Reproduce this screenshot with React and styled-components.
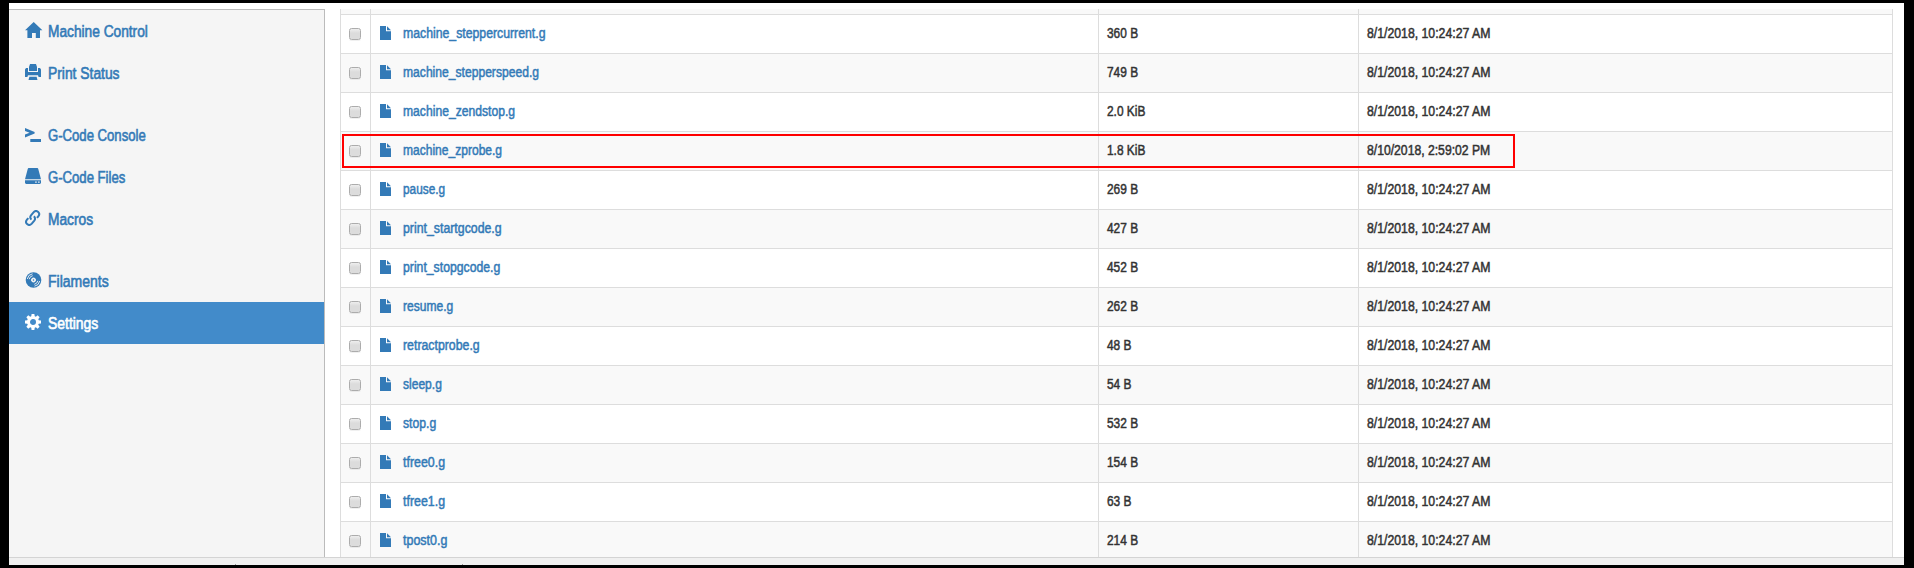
import React from "react";
import styled, { createGlobalStyle } from "styled-components";

const Global = createGlobalStyle`
  * { box-sizing: border-box; }
  body { margin: 0; background: #000; overflow: hidden; }
`;

const Frame = styled.div`
  width: 1914px;
  height: 568px;
  padding: 3px 10px 3px 9px;
  background: #000;
  font-family: "Liberation Sans", Arial, sans-serif;
`;

const Page = styled.div`
  height: 562px;
  background: #fff;
  padding-top: 6px;
  display: flex;
  flex-direction: column;
  overflow: hidden;
`;

const Body = styled.div`
  display: flex;
  height: 548px;
  overflow: hidden;
`;

const Sidebar = styled.nav`
  width: 316px;
  flex: none;
  background: #f5f5f5;
  border-top: 1px solid #bbb;
  border-right: 1px solid #bbb;
`;

const NavGroup = styled.div`
  margin-bottom: 20px;
`;

const NavItem = styled.a`
  display: flex;
  align-items: center;
  height: 42px;
  padding-left: 16px;
  font-size: 16px;
  color: ${(p) => (p.$active ? "#fff" : "#337ab7")};
  background: ${(p) => (p.$active ? "#428bca" : "transparent")};
`;

const NavIcon = styled.svg`
  width: 18px;
  height: 16px;
  flex: none;
  margin: 0 5px 2px 0;
  fill: currentColor;
`;

/* Condensed medium lettering */
const Condensed = styled.span`
  display: inline-block;
  transform: scaleX(${(p) => p.$scale});
  transform-origin: left center;
  white-space: nowrap;
  -webkit-text-stroke: ${(p) => p.$weight || 0.5}px currentColor;
`;

const NavLabel = styled(Condensed)`
  margin-top: 2px;
`;

const CellText = styled(Condensed)`
  margin-bottom: 2px;
`;

const Content = styled.main`
  flex: 1;
  padding: 0 11px 0 15px;
`;

const Table = styled.div`
  border: solid #ddd;
  border-width: 0 1px;
`;

const Row = styled.div`
  position: relative;
  display: grid;
  grid-template-columns: 30px 728px 260px 1fr;
  height: ${(p) => (p.$partial ? 6 : 39)}px;
  border-bottom: 1px solid #ddd;
  background: ${(p) => (p.$odd ? "#f9f9f9" : "#fff")};
`;

const Cell = styled.div`
  display: flex;
  align-items: center;
  padding: 0 8px;
  border-right: ${(p) => (p.$last ? 0 : 1)}px solid #ddd;
  font-size: 14px;
  color: #333;
`;

const NameCell = styled(Cell)`
  padding-left: 9px;
  color: #337ab7;
`;

const Checkbox = styled.span`
  width: 12px;
  height: 12px;
  flex: none;
  margin-top: -1px;
  border: 1px solid #acacac;
  border-radius: 2.5px;
  background: linear-gradient(#eee, #dcdcdc 40%, #dcdcdc);
  box-shadow: 0 1px 0 rgba(0, 0, 0, 0.06);
`;

const FileIcon = styled.svg`
  width: 11px;
  height: 14px;
  flex: none;
  margin: 0 11.5px 2px 0;
  fill: currentColor;
`;

const Highlight = styled.div`
  position: absolute;
  left: 1px;
  top: 2px;
  width: 1173px;
  height: 34px;
  border: 2px solid #f00;
`;

const Footer = styled.footer`
  display: flex;
  align-items: flex-end;
  height: 8px;
  border-top: 1px solid #d4d4d4;
  background: #f0f0f0;
`;

const FooterMark = styled.span`
  width: 1px;
  height: 1px;
  margin-left: 226px;
  background: #999;
`;

const glyphs = {
  home: <path d="M8.7 0 17.4 8.3H15V16h-4.2v-5H7v5H2.4V8.3H0Z" />,
  print: (
    <>
      <path d="M5 0h6l1 3v4H4V3Z" />
      <path d="M1 4h2v4h10V4h2l1 1.5V13h-2.4l-.6-1.7H3L2.4 13H0V5.5Z" />
      <path d="M4.4 12.8h7.2l.9 3.2h-9Z" />
    </>
  ),
  console: (
    <>
      <path d="M0 2 9.6 5.9v1.7L0 11.4V8.5l4.6-1.8L0 4.9Z" />
      <path d="M5.3 13H16v3H5.3Z" />
    </>
  ),
  drive: (
    <path
      fillRule="evenodd"
      d="M3.4 0h9.2l.6.7L16 11.3H0L2.8.7ZM0 12.2h16V15l-1 1H1l-1-1Zm10.2 1.2v1.4h1.5v-1.4Zm2.9 0v1.4h1.5v-1.4Z"
    />
  ),
  link: (
    <g fill="none" stroke="currentColor" strokeWidth="2">
      <path d="M6.4 9.6C4.8 8 5 6.600 6 5.300L8.500 2.300C10.300.3 12 .8 13.200 1.900s1.500 2.700.1 4.400L12 7.900" />
      <path d="M8.900 6.300c1.600 1.600 1.400 3 .4 4.300l-2.500 3.100c-1.800 2-3.500 1.500-4.700.4s-1.500-2.700-.1-4.400L3.300 8.100" />
    </g>
  ),
  disc: (
    <>
      <circle cx="8.500" cy="8" r="7.800" />
      <g fill="none" stroke="#f5f5f5">
        <circle cx="8.500" cy="8" r="2" fill="#f5f5f5" strokeWidth="1" />
        <path d="M2.300 7A6.300 6.300 0 0 1 7.500 1.800M4.200 7.200A4.400 4.400 0 0 1 7.700 3.700M14.700 9A6.300 6.300 0 0 1 9.500 14.200M12.800 8.800A4.400 4.400 0 0 1 9.300 12.300" strokeWidth=".9" />
      </g>
      <circle cx="8.500" cy="8" r=".8" />
    </>
  ),
  gear: (
    <>
      <circle cx="8" cy="8" r="4.500" fill="none" stroke="currentColor" strokeWidth="3" />
      {[0, 45, 90, 135, 180, 225, 270, 315].map((a) => (
        <path key={a} d="M6.200 3 6.600 0h2.800l.4 3Z" transform={`rotate(${a} 8 8)`} />
      ))}
    </>
  ),
};

const navGroups = [
  [
    ["home", "Machine Control", 0.857],
    ["print", "Print Status", 0.865],
  ],
  [
    ["console", "G-Code Console", 0.82],
    ["drive", "G-Code Files", 0.82],
    ["link", "Macros", 0.86],
  ],
  [
    ["disc", "Filaments", 0.875],
    ["gear", "Settings", 0.87],
  ],
];

const DATE = "8/1/2018, 10:24:27 AM";
const files = [
  ["machine_steppercurrent.g", 0.876, "360 B"],
  ["machine_stepperspeed.g", 0.865, "749 B"],
  ["machine_zendstop.g", 0.867, "2.0 KiB"],
  ["machine_zprobe.g", 0.86, "1.8 KiB", "8/10/2018, 2:59:02 PM"],
  ["pause.g", 0.845, "269 B"],
  ["print_startgcode.g", 0.88, "427 B"],
  ["print_stopgcode.g", 0.874, "452 B"],
  ["resume.g", 0.86, "262 B"],
  ["retractprobe.g", 0.88, "48 B"],
  ["sleep.g", 0.86, "54 B"],
  ["stop.g", 0.87, "532 B"],
  ["tfree0.g", 0.885, "154 B"],
  ["tfree1.g", 0.885, "63 B"],
  ["tpost0.g", 0.89, "214 B"],
];

export default function App() {
  return (
    <>
      <Global />
      <Frame>
        <Page>
          <Body>
            <Sidebar>
              {navGroups.map((group, i) => (
                <NavGroup key={i}>
                  {group.map(([icon, label, scale]) => (
                    <NavItem key={label} $active={label === "Settings"}>
                      <NavIcon viewBox="0 0 18 16">{glyphs[icon]}</NavIcon>
                      <NavLabel $scale={scale} $weight={0.6}>{label}</NavLabel>
                    </NavItem>
                  ))}
                </NavGroup>
              ))}
            </Sidebar>
            <Content>
              <Table>
                <Row $partial $odd><Cell /><Cell /><Cell /><Cell $last /></Row>
                {files.map(([name, scale, size, date = DATE], i) => (
                  <Row key={name} $odd={i % 2 === 1}>
                    <Cell><Checkbox /></Cell>
                    <NameCell>
                      <FileIcon viewBox="0 0 11 14">
                        <path d="M0 0h6v5.200h5V14H0ZM7 .2l4 4H7Z" />
                      </FileIcon>
                      <CellText $scale={scale}>{name}</CellText>
                    </NameCell>
                    <Cell><CellText $scale={0.85}>{size}</CellText></Cell>
                    <Cell $last><CellText $scale={date === DATE ? 0.876 : 0.87}>{date}</CellText></Cell>
                    {name === "machine_zprobe.g" && <Highlight />}
                  </Row>
                ))}
              </Table>
            </Content>
          </Body>
          <Footer><FooterMark /><FooterMark /></Footer>
        </Page>
      </Frame>
    </>
  );
}
